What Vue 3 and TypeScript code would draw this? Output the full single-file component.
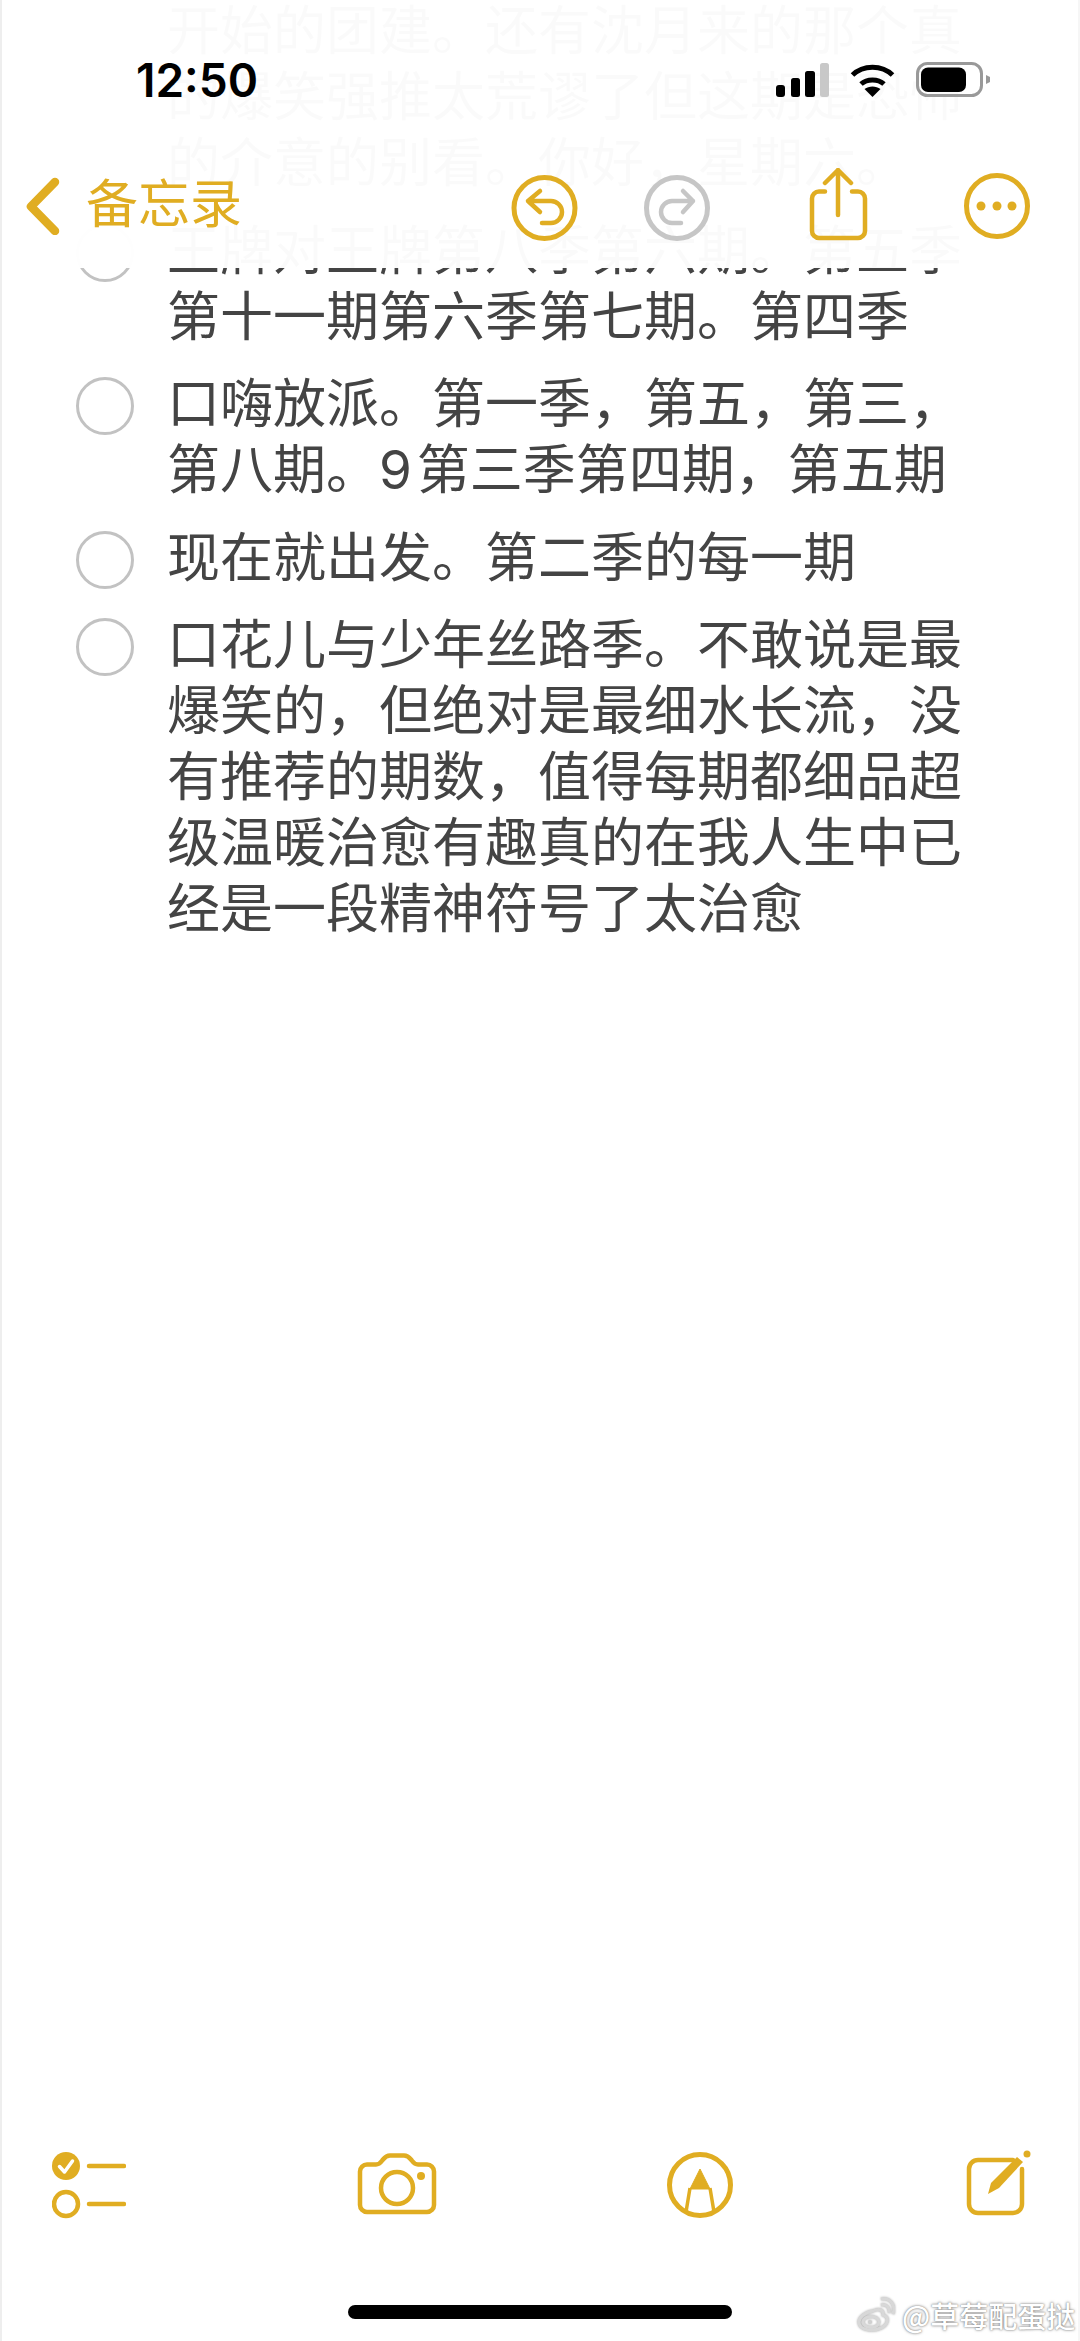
<template>
  <div class="page">
    <header class="top">
      <div class="status">
        <span class="time">12:50</span>
        <div class="status-icons">
          <svg class="signal" width="53" height="36" viewBox="0 0 53 36">
            <rect x="0" y="23" width="9" height="12" rx="3" />
            <rect x="15" y="16" width="9" height="19" rx="2.5" />
            <rect x="29" y="9" width="10" height="26" rx="2.5" />
            <rect x="44" y="1" width="9" height="34" rx="2.5" class="weak" />
          </svg>
          <svg width="45" height="36" viewBox="0 0 45 36">
            <path d="M2.5 13 C13 2.5 32 2.5 42.5 13" class="arc" />
            <path d="M11 22 C17 16.5 28 16.5 34 22" class="arc" />
            <path d="M14.5 27 C19 23.5 26 23.5 30.5 27 L22.5 35 Z" />
          </svg>
          <svg width="74" height="36" viewBox="0 0 74 36">
            <rect x="1.5" y="1.5" width="64" height="32" rx="10" class="shell" />
            <rect x="5" y="5.5" width="45" height="24.5" rx="7" />
            <path d="M70 13 L74 15 V20 L70 22 Z" class="cap" />
          </svg>
        </div>
      </div>
      <nav class="bar">
        <div class="back">
          <svg width="34" height="60" viewBox="0 0 34 60">
            <path d="M29 7 L5 31.5 L29 56" class="chevron" />
          </svg>
          <span class="back-label">备忘录</span>
        </div>
        <div class="actions">
          <div class="history">
            <svg width="70" height="74" viewBox="0 0 70 74">
              <circle cx="34.5" cy="40" r="30.5" />
              <path d="M30 23 L18 33 L30 44 M18 33 H41 a11 11 0 0 1 0 22 H32" class="thin" />
            </svg>
            <svg width="70" height="74" viewBox="0 0 70 74" class="off">
              <circle cx="35" cy="40" r="30.5" />
              <path d="M41 23 L51 33 L41 44 M51 33 H30 a11 11 0 0 0 0 22 H39" class="thin" />
            </svg>
          </div>
          <svg width="70" height="74" viewBox="0 0 70 74">
            <path d="M23 23.5 H17 a7 7 0 0 0 -7 7 V63 a7 7 0 0 0 7 7 H56 a7 7 0 0 0 7 -7 V30.5 a7 7 0 0 0 -7 -7 H50" class="thin" />
            <path d="M36 2 V47 M23 15 L36 2 L49 15" class="thin" />
          </svg>
          <svg width="70" height="74" viewBox="0 0 70 74">
            <circle cx="35" cy="38" r="30.5" />
            <g class="dots">
              <circle cx="19" cy="38" r="4.5" />
              <circle cx="35" cy="38" r="4.5" />
              <circle cx="50" cy="38" r="4.5" />
            </g>
          </svg>
        </div>
      </nav>
    </header>

    <ul class="note">
      <li v-for="item in items" :key="item.text" class="row">
        <span class="check" :class="{ hidden: item.continued }"></span>
        <p class="line">{{ item.text }}</p>
      </li>
    </ul>

    <footer class="tools">
      <svg width="74" height="70" viewBox="0 0 74 70">
        <circle cx="14" cy="16" r="14" class="solid" />
        <path d="M7.5 16.5 L12.5 22 L20.5 11" class="tick" />
        <path d="M37 16 H72" class="thin" />
        <circle cx="14" cy="54" r="12" class="small" />
        <path d="M37 54 H72" class="thin" />
      </svg>
      <svg width="80" height="70" viewBox="0 0 80 70">
        <path d="M10 14.5 H19 C23 14.5 24 12 26 9.5 C28 7 29.5 5.5 33 5.5 H47 C50.5 5.5 52 7 54 9.5 C56 12 57 14.5 61 14.5 H70 A7 7 0 0 1 77 21.5 V55 A7 7 0 0 1 70 62 H10 A7 7 0 0 1 3 55 V21.5 A7 7 0 0 1 10 14.5 Z" class="thin" />
        <circle cx="40" cy="38" r="16" class="small" />
        <circle cx="64" cy="26" r="4" class="solid" />
      </svg>
      <svg width="68" height="70" viewBox="0 0 68 70">
        <circle cx="33" cy="35" r="30.5" />
        <path d="M33 19 L43 39 H23 Z" class="solid pen" />
        <path d="M23 38 L19 62 M43 38 L47 62" class="legs" />
      </svg>
      <svg width="66" height="70" viewBox="0 0 66 70">
        <path d="M47 10 H12 a9 9 0 0 0 -9 9 V54 a9 9 0 0 0 9 9 H47 a9 9 0 0 0 9 -9 V19" class="thin" />
        <path d="M22 44 L25 33 L51 7 L57 12 L33 38 Z" class="solid" />
        <circle cx="61" cy="4" r="3.5" class="solid" />
      </svg>
    </footer>

    <div class="home"></div>

    <div class="mark">
      <svg width="38" height="36" viewBox="0 0 38 36">
        <path d="M16 14 C22 11 27 13 26 18 C33 20 31 28 24 31 C15 35 3 33 2 26 C1 21 8 15 16 14 Z" class="logo" />
        <ellipse cx="14" cy="25" rx="8" ry="5.5" class="logo" />
        <circle cx="13" cy="25" r="2" class="logo-dot" />
        <path d="M24 8 C30 7 33 11 32 16 M24 2 C33 0 39 8 36 17" class="logo" />
      </svg>
      <span class="mark-text">@草莓配蛋挞</span>
    </div>
  </div>
</template>

<script setup lang="ts">
interface NoteItem {
  text: string
  continued?: boolean
}

// first row starts above the fold, so it has no circle of its own
const items: NoteItem[] = [
  { text: '开始的团建。还有沈月来的那个真的爆笑强推太荒谬了但这期是恐怖的介意的别看。你好，星期六。', continued: true },
  { text: '王牌对王牌第八季第六期。第五季第十一期第六季第七期。第四季' },
  { text: '口嗨放派。第一季，第五，第三，第八期。9\u200a第三季第四期，第五期' },
  { text: '现在就出发。第二季的每一期' },
  { text: '口花儿与少年丝路季。不敢说是最爆笑的，但绝对是最细水长流，没有推荐的期数，值得每期都细品超级温暖治愈有趣真的在我人生中已经是一段精神符号了太治愈' },
]
</script>

<style>
html,
body {
  background: #fff;
}
</style>

<style scoped>
.page {
  position: relative;
  display: flex;
  flex-direction: column;
  width: 1080px;
  height: 2341px;
  overflow: hidden;
  background: #fff;
  box-shadow: inset 2px 0 #eeeeee, inset -2px 0 #f6f6f6;
  font-family: "Noto Sans CJK SC", sans-serif;
}

.top {
  position: absolute;
  top: 0;
  left: 2px;
  right: 2px;
  z-index: 2;
  height: 268px;
  box-sizing: border-box;
  padding-top: 60px;
  background: rgba(255, 255, 255, 0.975);
}

.status {
  display: flex;
  align-items: center;
  justify-content: space-between;
  height: 40px;
  padding: 0 88px 0 134px;
}

.time {
  font-family: Inter, sans-serif;
  font-size: 46px;
  font-weight: 600;
  line-height: 40px;
  color: #000;
}

.status-icons {
  display: flex;
  align-items: center;
  gap: 21px;
}

.status-icons svg {
  fill: #000;
}

.signal .weak {
  fill: #c8c8c8;
}

.arc {
  fill: none;
  stroke: #000;
  stroke-width: 5;
}

.shell {
  fill: none;
  stroke: #999;
  stroke-width: 3;
}

.cap {
  fill: #999;
}

.bar {
  display: flex;
  align-items: center;
  justify-content: space-between;
  height: 74px;
  margin-top: 68px;
  padding: 0 46px 0 24px;
}

.back {
  display: flex;
  align-items: center;
  gap: 26px;
}

.back-label {
  margin-bottom: 8px;
  font-size: 52px;
  line-height: 60px;
  color: #e0ad22;
}

.chevron {
  fill: none;
  stroke: #e0ad22;
  stroke-width: 8.5;
  stroke-linecap: round;
  stroke-linejoin: round;
}

.actions {
  display: flex;
  gap: 90px;
}

.history {
  display: flex;
  gap: 62px;
}

svg circle,
svg path {
  fill: none;
  stroke: #e0ad22;
  stroke-width: 5;
}

.status-icons path {
  fill: #000;
  stroke: none;
}

.status-icons .arc {
  fill: none;
  stroke: #000;
  stroke-width: 5;
}

.status-icons .cap {
  fill: #999;
}

.thin {
  stroke-width: 4.5;
  stroke-linecap: round;
  stroke-linejoin: round;
}

.off circle,
.off path {
  stroke: #c6c6c6;
}

.dots circle,
.solid {
  fill: #e0ad22;
  stroke: none;
}

.pen {
  stroke: #e0ad22;
  stroke-width: 1;
  stroke-linejoin: round;
}

.tick {
  stroke: #fff;
  stroke-width: 3.5;
  stroke-linecap: round;
  stroke-linejoin: round;
}

.small {
  stroke-width: 4.5;
}

.legs {
  stroke-width: 3.5;
}

.note {
  flex: 1;
  display: flex;
  flex-direction: column;
  gap: 21.5px;
  list-style: none;
  margin: -2px 0 0;
  padding: 0 0 0 76px;
}

.row {
  display: flex;
  align-items: flex-start;
  gap: 33px;
}

.check {
  flex: none;
  width: 58px;
  height: 58px;
  box-sizing: border-box;
  margin-top: 6px;
  border: 3px solid #c2c2c2;
  border-radius: 50%;
}

.check.hidden {
  visibility: hidden;
}

.line {
  width: 805px;
  margin: 0;
  font-family: Inter, "Noto Sans CJK SC", sans-serif;
  font-size: 53px;
  line-height: 66px;
  color: #444;
}

.tools {
  display: flex;
  align-items: center;
  justify-content: space-between;
  height: 70px;
  padding: 0 48px 0 52px;
}

.home {
  flex: none;
  width: 384px;
  height: 14px;
  margin: 85px auto 22px;
  border-radius: 7px;
  background: #000;
}

.mark {
  position: absolute;
  left: 857px;
  top: 2297px;
  display: flex;
  align-items: center;
  gap: 7px;
}

.mark svg {
  filter: drop-shadow(0 0 1px #aaa);
}

.logo {
  fill: none;
  stroke: #d8d8d8;
  stroke-width: 3;
}

.logo-dot {
  fill: #d0d0d0;
  stroke: none;
}

.mark-text {
  font-size: 29px;
  line-height: 36px;
  font-weight: 500;
  white-space: nowrap;
  color: #fff;
  text-shadow: 0 0 3px #777, 0 0 1px #999;
}
</style>
